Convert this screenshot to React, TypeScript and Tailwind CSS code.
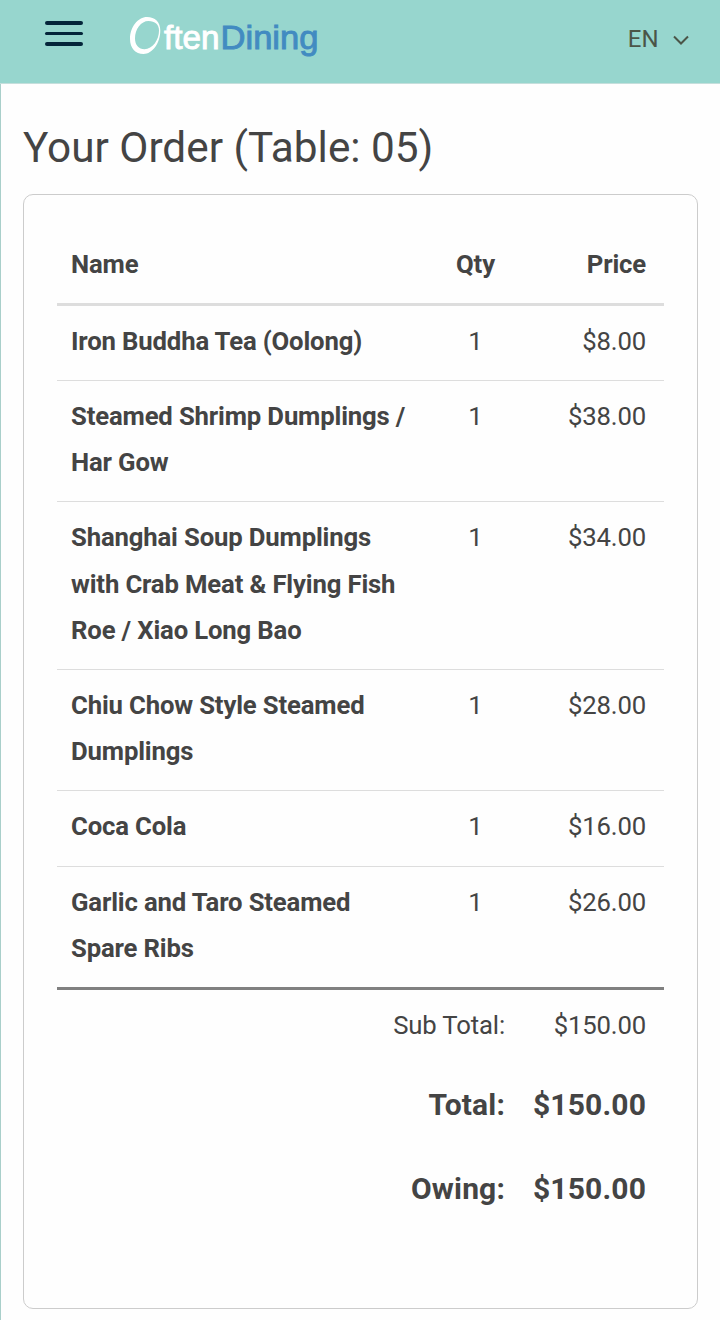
const items = [
  { name: "Iron Buddha Tea (Oolong)", qty: 1, price: "$8.00" },
  { name: "Steamed Shrimp Dumplings / Har Gow", qty: 1, price: "$38.00" },
  {
    name: "Shanghai Soup Dumplings with Crab Meat & Flying Fish Roe / Xiao Long Bao",
    qty: 1,
    price: "$34.00",
  },
  { name: "Chiu Chow Style Steamed Dumplings", qty: 1, price: "$28.00" },
  { name: "Coca Cola", qty: 1, price: "$16.00" },
  { name: "Garlic and Taro Steamed Spare Ribs", qty: 1, price: "$26.00" },
];

function Logo() {
  return (
    <svg width="190" height="46" viewBox="0 0 190 46" className="ml-[46px]">
      <path
        fillRule="evenodd"
        fill="#fff"
        d="M18 4C26 4 31.300 9 31.300 17.500C31.300 30 23.500 41 14.500 41C6.500 41 1 35 1 26C1 14 9 4 18 4ZM19.500 8C12 8 6 16 6 25.500C6 32 9.800 36.200 15.500 36.200C23.500 36.200 30 27 30 17.500C30 11.500 26 8 19.500 8Z"
      />
      <g fontFamily="Liberation Sans, Arial, sans-serif" fontSize="33" strokeWidth="0.9">
        <text x="35" y="36.300" fill="#fff" stroke="#fff" textLength="55.500" lengthAdjust="spacingAndGlyphs">
          ften
        </text>
        <text x="91.500" y="36.300" fill="#428bc1" stroke="#428bc1" textLength="98" lengthAdjust="spacingAndGlyphs">
          Dining
        </text>
      </g>
    </svg>
  );
}

function Header() {
  return (
    <header className="flex h-[84px] items-start border-b border-[#c5dfdc] bg-[#97d6ce]">
      <div className="mt-[21px] ml-[45px] flex w-[38px] flex-col gap-[7px]">
        <span className="h-[4px] rounded-full bg-[#04253a]" />
        <span className="h-[3px] rounded-full bg-[#04253a]" />
        <span className="h-[4px] rounded-full bg-[#04253a]" />
      </div>
      <div className="mt-[13px]">
        <Logo />
      </div>
      <div className="mt-[21px] mr-[30px] ml-auto flex items-center text-[#4b5548]">
        <span className="text-[24px] leading-[36px]">EN</span>
        <svg width="18" height="12" viewBox="0 0 18 12" className="mt-[2px] ml-[13.400px]">
          <path d="M2 2.500L9 9.500L16 2.500" fill="none" stroke="currentColor" strokeWidth="2" />
        </svg>
      </div>
    </header>
  );
}

export default function App() {
  return (
    <div className="h-[1320px] overflow-hidden bg-[#fefefe] font-['Roboto',sans-serif] text-[#444]">
      <Header />
      <main className="h-[1236px] border-l border-[#a9cfca] pt-[37px] pr-[22px] pl-[22px]">
        <h1 className="text-[42.300px] leading-[54px]">Your Order (Table: 05)</h1>
        <section className="mt-[19px] h-[1115px] rounded-[10px] border border-[#ccc] px-[33px] pt-[32px] text-[25.700px] leading-[46.250px] tracking-[-0.150px]">
          <div className="grid h-[79px] grid-cols-[370px_97px_140px] border-b-[3px] border-[#ddd] pt-[14px] font-bold">
            <div className="pl-[14px]">Name</div>
            <div className="text-center">Qty</div>
            <div className="pr-[18px] text-right">Price</div>
          </div>
          {items.map((item) => (
            <div
              key={item.name}
              className="grid grid-cols-[370px_97px_140px] border-b border-[#ddd] pt-[11.985px] pb-[15.880px] last-of-type:border-b-0"
            >
              <div className="pr-[14px] pl-[14px] font-bold">{item.name}</div>
              <div className="text-center">{item.qty}</div>
              <div className="pr-[18px] text-right">{item.price}</div>
            </div>
          ))}
          <footer className="border-t-[3px] border-[#808080] text-right">
            <div className="flex justify-end pt-[12px] pr-[18px]">
              <span>Sub Total:</span>
              <span className="w-[141px]">$150.00</span>
            </div>
            <div className="flex justify-end pt-[34px] pr-[18px] text-[30px] font-bold tracking-[0.150px]">
              <span>Total:</span>
              <span className="w-[141px]">$150.00</span>
            </div>
            <div className="flex justify-end pt-[38px] pr-[18px] text-[30px] font-bold tracking-[0.150px]">
              <span>Owing:</span>
              <span className="w-[141px]">$150.00</span>
            </div>
          </footer>
        </section>
      </main>
    </div>
  );
}
